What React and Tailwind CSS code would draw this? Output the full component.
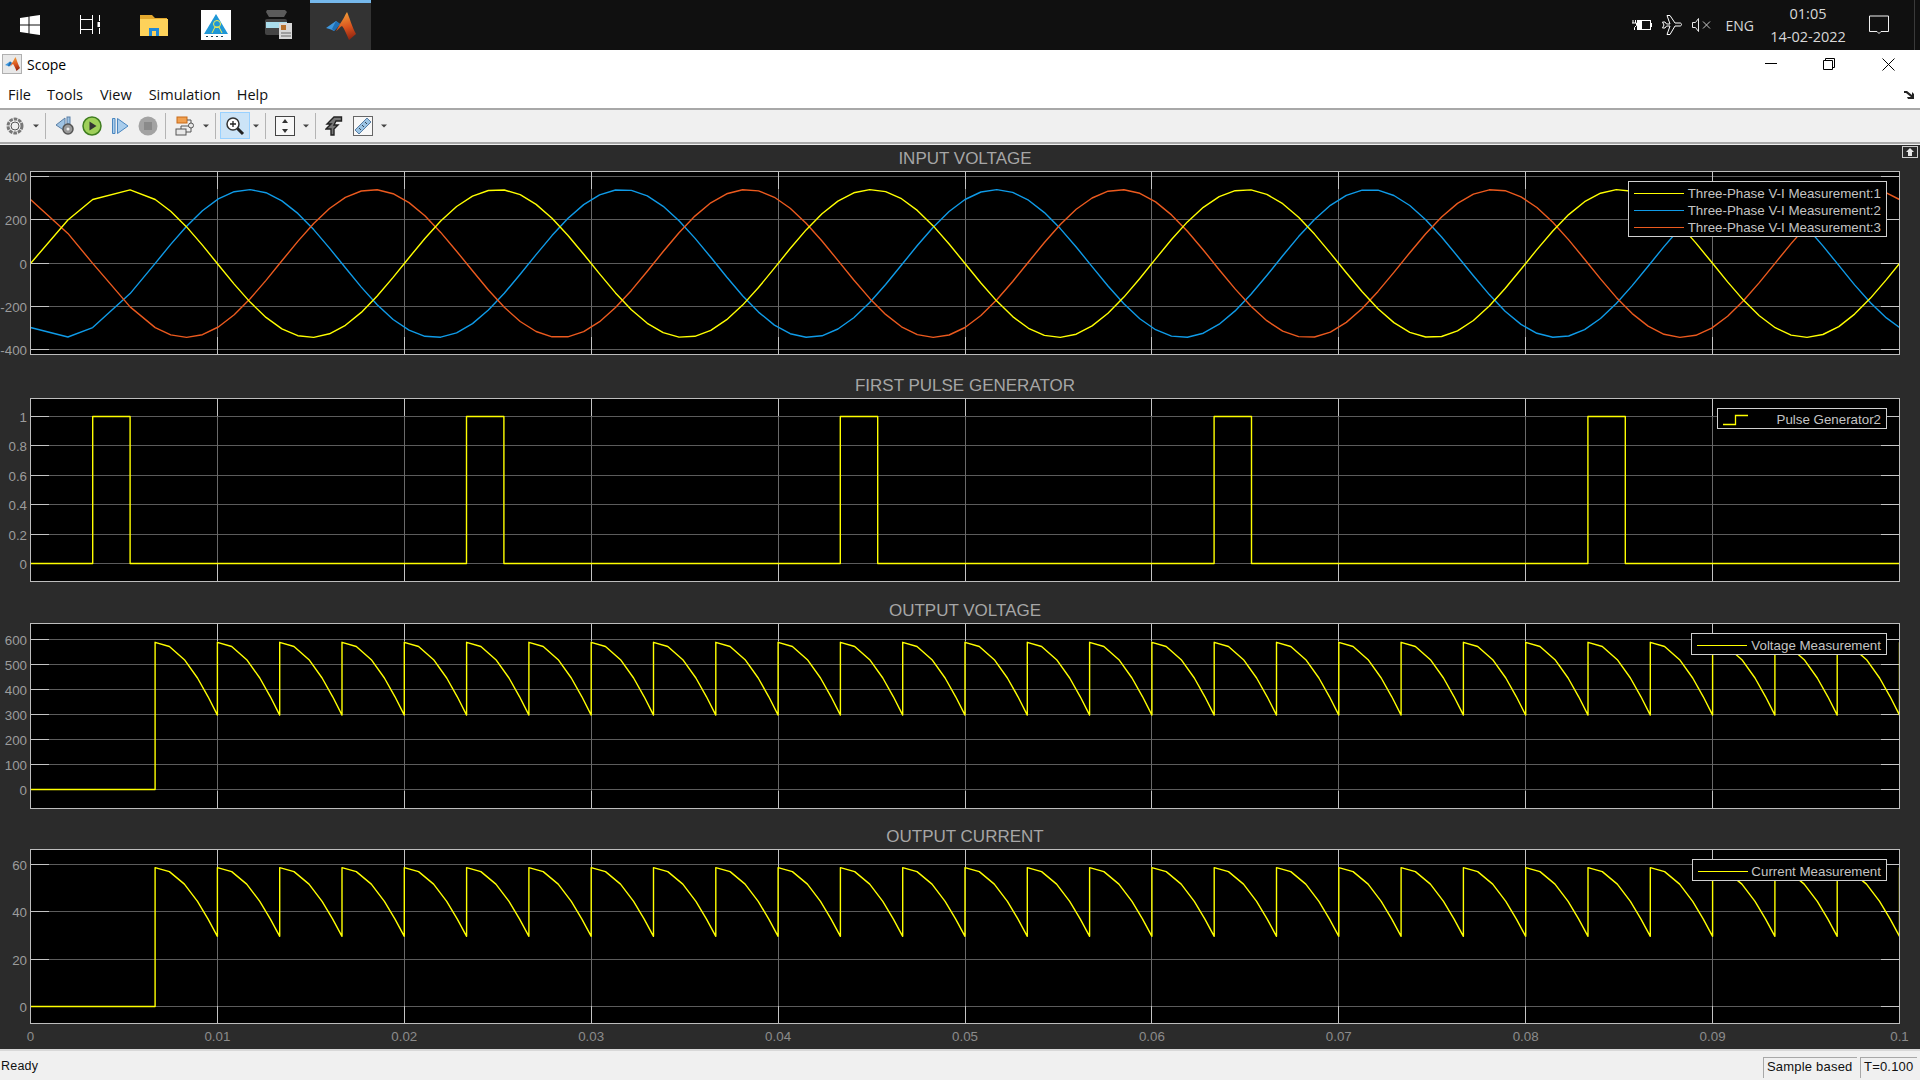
// App.jsx - Simulink scope window
import React from "react";

const PLOT_W = 1870;
const YELLOW = "#ffff00";
const BLUE = "#0f9be8";
const ORANGE = "#ec5a1e";

const xOf = (t) => 0.5 + (t / 0.1) * (PLOT_W - 1);

// sample times are uneven in the solver output, so the first ones are coarse
const sineTimes = () => {
  const ts = [0, 0.002, 0.00333, 0.00533, 0.00667];
  for (let t = 0.0075; t < 0.1; t += 0.00085) ts.push(t);
  ts.push(0.1);
  return ts;
};

const sinePoints = (shift, yOf) =>
  sineTimes()
    .map((t) => `${xOf(t).toFixed(1)},${yOf(340 * Math.sin(2 * Math.PI * 50 * t + shift)).toFixed(1)}`)
    .join(" ");

const pulsePoints = (yOf) => {
  const pts = [[0, 0]];
  for (let k = 0; k < 5; k++) {
    const a = 0.00333 + k * 0.02;
    const b = 0.00533 + k * 0.02;
    pts.push([a, 0], [a, 1], [b, 1], [b, 0]);
  }
  pts.push([0.1, 0]);
  return pts.map(([t, v]) => `${xOf(t).toFixed(1)},${yOf(v).toFixed(1)}`).join(" ");
};

// rectified output: zero until first firing, then a cosine cap every 1/300 s
const rectifiedPoints = (peak, yOf) => {
  const period = 1 / 300;
  const start = 1 / 150;
  const fracs = [0, 0.23, 0.47, 0.68, 0.85];
  const pts = [[0, 0], [start, 0]];
  for (let k = 0; start + k * period < 0.0999; k++) {
    const t0 = start + k * period;
    fracs.forEach((f) => {
      pts.push([t0 + f * period, peak * Math.cos((f * Math.PI) / 3)]);
    });
    pts.push([t0 + period, peak * 0.505]);
  }
  pts.push([0.1, peak]);
  return pts.map(([t, v]) => `${xOf(t).toFixed(1)},${yOf(v).toFixed(1)}`).join(" ");
};

const linear = (v0, y0, v1, y1) => (v) => y0 + ((v - v0) * (y1 - y0)) / (v1 - v0);

const y1 = linear(0, 92.5, 400, 5.5);
const y2 = linear(0, 165.5, 1, 18.5);
const y3 = linear(0, 166.5, 600, 16.5);
const y4 = linear(0, 157.5, 60, 15.5);

function Plot({ title, height, className, ticks, traces, children }) {
  const grid = [1, 2, 3, 4, 5, 6, 7, 8, 9].map((i) => Math.floor(xOf(i / 100)) + 0.5);
  return (
    <div className={className}>
      <div className="ml-[30px] h-[26px] w-[1870px] text-center text-[17px] leading-[28px] text-[#a6a6a6]">{title}</div>
      <div className="flex">
        <div className="relative w-[30px]" style={{ height }}>
          {ticks.map((t) => (
            <span
              key={t.label}
              className="absolute right-[3px] text-[13.33px] leading-[14px] text-[#9c9c9c]"
              style={{ top: t.y - 6 }}
            >
              {t.label}
            </span>
          ))}
        </div>
        <div className="relative w-[1870px] bg-black" style={{ height }}>
          <svg width={PLOT_W} height={height} className="block">
            {ticks.map((t) => (
              <g key={t.label}>
                <line x1="0" x2={PLOT_W} y1={t.y} y2={t.y} stroke="#5c5c5c" />
                <line x1="0" x2="19" y1={t.y} y2={t.y} stroke="#c4c4c4" />
                <line x1={PLOT_W - 19} x2={PLOT_W} y1={t.y} y2={t.y} stroke="#c4c4c4" />
              </g>
            ))}
            {grid.map((x) => (
              <g key={x}>
                <line x1={x} x2={x} y1="0" y2={height} stroke="#6a6a6a" />
                <line x1={x} x2={x} y1="0" y2="18" stroke="#c4c4c4" />
                <line x1={x} x2={x} y1={height - 18} y2={height} stroke="#c4c4c4" />
              </g>
            ))}
            {traces.map((tr, i) => (
              <polyline key={i} points={tr.points} fill="none" stroke={tr.color} strokeWidth="1.4" strokeLinejoin="round" />
            ))}
            <rect x="0.5" y="0.5" width={PLOT_W - 1} height={height - 1} fill="none" stroke="#bdbdbd" />
          </svg>
          {children}
        </div>
      </div>
    </div>
  );
}

function Legend({ className, rows, wide }) {
  return (
    <div className={`absolute top-[10px] right-[13px] border border-[#d0d0d0] bg-black px-[5px] ${className}`}>
      {rows.map((r) => (
        <div key={r.label} className="flex h-[17px] items-center justify-between">
          {r.step ? (
            <svg width="26" height="12" className="shrink-0">
              <path d="M0 10.5H12.5V1.5H25" fill="none" stroke={r.color} strokeWidth="1.3" />
            </svg>
          ) : (
            <span className="h-[1.5px] w-[50px] shrink-0" style={{ backgroundColor: r.color }} />
          )}
          <span className={`text-[13.33px] leading-[17px] whitespace-nowrap text-[#c4c4c4] ${wide ? "ml-[4px]" : ""}`}>
            {r.label}
          </span>
        </div>
      ))}
    </div>
  );
}

function Caret() {
  return (
    <svg width="6" height="4" className="shrink-0">
      <path d="M0 0.5H6L3 3.5Z" fill="#444" />
    </svg>
  );
}

function Sep({ className }) {
  return <span className={`h-[26px] w-px shrink-0 bg-[#b4b4b4] ${className}`} />;
}

function MatlabLogo({ size }) {
  return (
    <svg width={size} height={size} viewBox="0 0 30 30" className="shrink-0">
      <defs>
        <linearGradient id="peak" x1="0.4" y1="0" x2="0.6" y2="1">
          <stop offset="0" stopColor="#f2a03a" />
          <stop offset="0.55" stopColor="#d9531e" />
          <stop offset="1" stopColor="#8f2410" />
        </linearGradient>
      </defs>
      <path d="M0 16L10 9L14 12L8 19L5 17.5Z" fill="#3f97dd" />
      <path d="M10 9L14 12L11 16L8 19L6 17Z" fill="#1f6fb5" />
      <path d="M14 12C17 8 19 3 21 0C23 4 26 15 30 22L23 28C21 23 18 16 16 14C14 15 12 18 10 19Z" fill="url(#peak)" />
    </svg>
  );
}

function TaskBar() {
  return (
    <div className="flex h-[50px] shrink-0 items-center bg-[#101010]">
      {/* start */}
      <svg width="20" height="20" viewBox="0 0 20 20" className="ml-[20px] shrink-0">
        <path d="M0 3L8.5 1.8V9.5H0ZM9.5 1.6L20 0V9.5H9.5ZM0 10.5H8.5V18.2L0 17ZM9.5 10.5H20V20L9.5 18.4Z" fill="#fff" />
      </svg>
      {/* task view */}
      <svg width="20" height="20" viewBox="0 0 20 20" className="ml-[40px] shrink-0">
        <path d="M0.5 0V19M12.5 0V19M0 4.5H13M0 14.5H13M19.5 0V6M19.5 13V19" fill="none" stroke="#fff" />
        <rect x="17.5" y="7" width="3" height="5" fill="#fff" />
      </svg>
      {/* explorer */}
      <svg width="28" height="24" viewBox="0 0 28 24" className="ml-[40px] shrink-0">
        <path d="M0 2H12L15 5H27V23H0Z" fill="#e3a82e" />
        <rect x="0" y="6" width="28" height="17" fill="#fdd25a" />
        <path d="M9 23V15H19V23H16V18H12V23Z" fill="#1e88d8" />
      </svg>
      {/* institute logo */}
      <div className="ml-[33px] flex h-[30px] w-[30px] shrink-0 items-center justify-center bg-white">
        <svg width="26" height="26" viewBox="0 0 26 26">
          <path d="M13 2L25 22H1Z" fill="#1f97d6" />
          <circle cx="14" cy="12" r="3.5" fill="none" stroke="#f2ee50" />
          <path d="M9 21L12 15L16 15L19 21" fill="none" stroke="#f2ee50" />
          <path d="M3 24.5H23" stroke="#245" strokeDasharray="2 3" />
        </svg>
      </div>
      {/* scanner */}
      <svg width="30" height="32" viewBox="0 0 30 32" className="ml-[32px] shrink-0">
        <path d="M4 1H22L24 3L21 8H6L3 3Z" fill="#5b5b5b" />
        <rect x="2" y="10" width="22" height="16" rx="2" fill="#444" />
        <rect x="3" y="13" width="21" height="6" fill="#a9dcec" />
        <rect x="16" y="14" width="13" height="16" fill="#d8d8d8" />
        <rect x="18" y="16" width="5" height="5" fill="#b6702c" />
        <path d="M18 24H28M18 27H28" stroke="#666" />
      </svg>
      {/* active matlab tile */}
      <div className="ml-[17px] flex h-[50px] w-[61px] shrink-0 items-center justify-center border-t-[3px] border-[#76b9ed] bg-[#333333]">
        <MatlabLogo size={30} />
      </div>

      {/* tray */}
      <svg width="20" height="14" viewBox="0 0 20 14" className="ml-auto shrink-0">
        <path d="M1 2V5M3.5 2V5M0 5H4.5V7.5L2.5 9.5V12" fill="none" stroke="#fff" />
        <rect x="5.5" y="2.5" width="13" height="9" fill="none" stroke="#fff" />
        <rect x="6" y="3" width="4" height="8" fill="#fff" />
        <rect x="19" y="5" width="1" height="4" fill="#fff" />
      </svg>
      <svg width="20" height="20" viewBox="0 0 20 20" className="ml-[10px] shrink-0">
        <path d="M0.5 7H3L4.5 9H8L5 0.5H8L13 8H18C20 8 20 11 18 11H13L8 19.5H5L8 11H4.5L3 13H0.5L2 10Z" fill="none" stroke="#fff" />
      </svg>
      <svg width="19" height="14" viewBox="0 0 19 14" className="ml-[10px] shrink-0">
        <path d="M0.5 4.5H3.5L6.5 0.5V13.5L3.5 9.5H0.5Z" fill="none" stroke="#e8e8e8" />
        <path d="M11 3.5L18 10.5M18 3.5L11 10.5" stroke="#c8c8c8" />
      </svg>
      <span className="ml-[15px] font-['Open_Sans',sans-serif] text-[14px] text-[#d8d8d8]">ENG</span>
      <div className="ml-[14px] flex w-[80px] flex-col items-center font-['Open_Sans',sans-serif] text-[14.5px] leading-[23px] text-[#d8d8d8]">
        <span>01:05</span>
        <span>14-02-2022</span>
      </div>
      <svg width="20" height="20" viewBox="0 0 20 20" className="ml-[21px] shrink-0">
        <path d="M0.5 1H19.5V16.5H12L10 18.5L8 16.5H0.5Z" fill="none" stroke="#f0f0f0" />
      </svg>
      <span className="mr-[5px] ml-[25px] h-[50px] w-px bg-[#3a3a3a]" />
    </div>
  );
}

function TitleBar() {
  return (
    <div className="flex h-[32px] shrink-0 items-center bg-white pb-[4px] pl-[2px]">
      <div className="flex h-[20px] w-[20px] shrink-0 items-center justify-center border border-[#b0b0b0] bg-[#e8e8e8]">
        <MatlabLogo size={15} />
      </div>
      <span className="ml-[5px] font-['Open_Sans',sans-serif] text-[14px] text-black">Scope</span>
      <svg width="12" height="2" className="ml-auto shrink-0">
        <rect width="12" height="1" fill="#000" />
      </svg>
      <svg width="12" height="12" viewBox="0 0 12 12" className="ml-[46px] shrink-0">
        <path d="M0.5 2.5H9.5V11.5H0.5ZM2.5 2.5V0.5H11.5V9.5H9.5" fill="none" stroke="#000" />
      </svg>
      <svg width="13" height="13" viewBox="0 0 13 13" className="mr-[25px] ml-[47px] shrink-0">
        <path d="M0.5 0.5L12.5 12.5M12.5 0.5L0.5 12.5" stroke="#000" />
      </svg>
    </div>
  );
}

function MenuBar() {
  return (
    <div className="flex h-[28px] shrink-0 items-center border-b-2 border-[#a8a8a8] bg-white pb-[1px] pl-[8px] font-['Open_Sans',sans-serif] text-[14.5px] text-[#111]">
      <span>File</span>
      <span className="ml-[16px]">Tools</span>
      <span className="ml-[17px]">View</span>
      <span className="ml-[17px]">Simulation</span>
      <span className="ml-[16px]">Help</span>
      <svg width="12" height="10" viewBox="0 0 12 10" className="mr-[5px] ml-auto shrink-0">
        <path d="M1 1H4L9 5V2L11 4V9H5L4 7H8L3 3H1Z" fill="#222" />
      </svg>
    </div>
  );
}

function ToolBar() {
  return (
    <div className="h-[35px] shrink-0 bg-[#f0f0f0]">
      <div className="flex h-[34px] items-center border-b-2 border-[#a8a8a8] pb-[1px]">
        <svg width="18" height="18" viewBox="0 0 18 18" className="ml-[6px] shrink-0">
          <circle cx="9" cy="9" r="7" fill="none" stroke="#777" strokeWidth="3" strokeDasharray="3.5 1" />
          <circle cx="9" cy="9" r="4" fill="#eee" stroke="#555" />
        </svg>
        <div className="ml-[9px] flex"><Caret /></div>
        <Sep className="ml-[6px]" />
        <svg width="20" height="20" viewBox="0 0 20 20" className="ml-[9px] shrink-0">
          <path d="M10 2L1 9L10 15Z" fill="#9fc3e3" stroke="#5a7fa5" />
          <rect x="12" y="1" width="3" height="7" fill="#9fc3e3" stroke="#5a7fa5" />
          <circle cx="13" cy="13" r="5" fill="#999" stroke="#555" strokeWidth="1.5" />
          <circle cx="13" cy="13" r="1.5" fill="#eee" />
        </svg>
        <svg width="20" height="20" viewBox="0 0 20 20" className="ml-[7px] shrink-0">
          <circle cx="10" cy="10" r="9" fill="#9fd05a" stroke="#3f7d1f" strokeWidth="1.5" />
          <path d="M7.5 5.5L14.5 10L7.5 14.5Z" fill="#333" />
        </svg>
        <svg width="17" height="16" viewBox="0 0 17 16" className="ml-[10px] shrink-0">
          <path d="M0.5 0.5H3V15.5H0.5Z" fill="#a9cdec" stroke="#4a86bf" />
          <path d="M5.5 0.5L16 8L5.5 15.5Z" fill="#a9cdec" stroke="#4a86bf" />
        </svg>
        <svg width="20" height="20" viewBox="0 0 20 20" className="ml-[9px] shrink-0">
          <circle cx="10" cy="10" r="9.5" fill="#a3a3a3" />
          <rect x="6" y="6" width="8" height="8" fill="#8a8a8a" />
        </svg>
        <Sep className="ml-[7px]" />
        <svg width="20" height="20" viewBox="0 0 20 20" className="ml-[9px] shrink-0">
          <rect x="2" y="1" width="10" height="6" fill="#f0a050" stroke="#c86a18" />
          <rect x="1" y="13" width="10" height="6" fill="#e8e8e8" stroke="#555" />
          <circle cx="16" cy="9.5" r="2.5" fill="#e8e8e8" stroke="#555" />
          <path d="M12 4H16V7M14 10H6V13M11 16H16V12" fill="none" stroke="#555" />
        </svg>
        <div className="ml-[8px] flex"><Caret /></div>
        <Sep className="ml-[6px]" />
        <div className="ml-[4px] flex h-[27px] w-[30px] shrink-0 items-center justify-center border border-[#99d1ff] bg-[#cce4f7]">
          <svg width="20" height="20" viewBox="0 0 20 20">
            <circle cx="8" cy="8" r="6" fill="#fff" stroke="#333" strokeWidth="1.5" />
            <path d="M5 8H11M8 5V11" stroke="#222" strokeWidth="1.3" />
            <path d="M12.5 12.5L18 18" stroke="#222" strokeWidth="3" />
          </svg>
        </div>
        <div className="ml-[3px] flex"><Caret /></div>
        <Sep className="ml-[6px]" />
        <svg width="20" height="20" viewBox="0 0 20 20" className="ml-[9px] shrink-0">
          <rect x="0.5" y="0.5" width="19" height="19" fill="#f8f8f8" stroke="#444" />
          <path d="M10 3L13 7H7ZM10 17L13 13H7Z" fill="#333" />
        </svg>
        <div className="ml-[8px] flex"><Caret /></div>
        <Sep className="ml-[6px]" />
        <svg width="18" height="20" viewBox="0 0 18 20" className="ml-[9px] shrink-0">
          <path d="M16.5 1H9L2 8H6L1 13H6V19H9V13L13 9H9L11 5H16.5Z" fill="#777" stroke="#222" strokeWidth="1.4" />
        </svg>
        <svg width="20" height="20" viewBox="0 0 20 20" className="ml-[10px] shrink-0">
          <rect x="0.5" y="0.5" width="19" height="19" fill="#f8f8f8" stroke="#666" />
          <path d="M2 14L14 2L18 6L6 18Z" fill="#9cc4e4" stroke="#5a7fa5" />
          <path d="M6 12L8 14M9 9L11 11M12 6L14 8" stroke="#345" />
        </svg>
        <div className="ml-[8px] flex"><Caret /></div>
      </div>
    </div>
  );
}

function StatusBar() {
  return (
    <div className="flex h-[31px] shrink-0 items-end border-t-2 border-[#d8d8d8] bg-[#f0f0f0] font-['Liberation_Sans',sans-serif] text-[13px] tracking-[0.2px] text-[#111]">
      <span className="mb-[4px] ml-[1px] text-[12.5px]">Ready</span>
      <span className="mb-[2px] ml-auto flex h-[21px] w-[94px] items-center border-t border-l border-[#a8a8a8] pb-[2px] pl-[3px]">Sample based</span>
      <span className="mr-[3px] mb-[2px] ml-[3px] flex h-[21px] w-[57px] items-center border-t border-l border-[#a8a8a8] pb-[2px] pl-[3px]">T=0.100</span>
    </div>
  );
}

export default function App() {
  const xLabels = ["0", "0.01", "0.02", "0.03", "0.04", "0.05", "0.06", "0.07", "0.08", "0.09", "0.1"];

  const ticks1 = [
    { label: "400", y: 5.5 },
    { label: "200", y: 48.5 },
    { label: "0", y: 92.5 },
    { label: "-200", y: 135.5 },
    { label: "-400", y: 178.5 },
  ];
  const ticks2 = [
    { label: "1", y: 18.5 },
    { label: "0.8", y: 47.5 },
    { label: "0.6", y: 77.5 },
    { label: "0.4", y: 106.5 },
    { label: "0.2", y: 136.5 },
    { label: "0", y: 165.5 },
  ];
  const ticks3 = [
    { label: "600", y: 16.5 },
    { label: "500", y: 41.5 },
    { label: "400", y: 66.5 },
    { label: "300", y: 91.5 },
    { label: "200", y: 116.5 },
    { label: "100", y: 141.5 },
    { label: "0", y: 166.5 },
  ];
  const ticks4 = [
    { label: "60", y: 15.5 },
    { label: "40", y: 62.5 },
    { label: "20", y: 110.5 },
    { label: "0", y: 157.5 },
  ];

  return (
    <div className="flex h-[1080px] w-[1920px] flex-col overflow-hidden bg-[#2b2b2b] font-['Liberation_Sans',sans-serif]">
      <TaskBar />
      <TitleBar />
      <MenuBar />
      <ToolBar />
      <div className="relative min-h-0 flex-1 bg-[#2b2b2b]">
        <span className="absolute top-[1px] right-[2px] flex h-[12px] w-[16px] items-center justify-center border border-[#cfcfcf]">
          <svg width="10" height="8" viewBox="0 0 10 8">
            <path d="M5 0L9 4H7V8H3V4H1Z" fill="#e8e8e8" />
          </svg>
        </span>
        <Plot
          title="INPUT VOLTAGE"
          height={184}
          ticks={ticks1}
          traces={[
            { color: BLUE, points: sinePoints((-2 * Math.PI) / 3, y1) },
            { color: ORANGE, points: sinePoints((2 * Math.PI) / 3, y1) },
            { color: YELLOW, points: sinePoints(0, y1) },
          ]}
        >
          <Legend
            className="pt-[3px]"
            wide
            rows={[
              { label: "Three-Phase V-I Measurement:1", color: YELLOW },
              { label: "Three-Phase V-I Measurement:2", color: BLUE },
              { label: "Three-Phase V-I Measurement:3", color: ORANGE },
            ]}
          />
        </Plot>
        <Plot
          title="FIRST PULSE GENERATOR"
          className="mt-[17px]"
          height={184}
          ticks={ticks2}
          traces={[{ color: YELLOW, points: pulsePoints(y2) }]}
        >
          <Legend
            className="w-[170px] pt-[2px]"
            rows={[{ label: "Pulse Generator2", color: YELLOW, step: true }]}
          />
        </Plot>
        <Plot
          title="OUTPUT VOLTAGE"
          className="mt-[15px]"
          height={186}
          ticks={ticks3}
          traces={[{ color: YELLOW, points: rectifiedPoints(589, y3) }]}
        >
          <Legend
            className="w-[196px] pt-[3px]"
            rows={[{ label: "Voltage Measurement", color: YELLOW }]}
          />
        </Plot>
        <Plot
          title="OUTPUT CURRENT"
          className="mt-[14px]"
          height={175}
          ticks={ticks4}
          traces={[{ color: YELLOW, points: rectifiedPoints(58.7, y4) }]}
        >
          <Legend
            className="w-[195px] pt-[3px]"
            rows={[{ label: "Current Measurement", color: YELLOW }]}
          />
        </Plot>
        <div className="relative mt-[6px] h-[14px] w-[1920px]">
          {xLabels.map((label, i) => (
            <span
              key={label}
              className="absolute -translate-x-1/2 text-[13.33px] leading-[14px] text-[#8c8c8c]"
              style={{ left: 30.5 + i * 186.9 }}
            >
              {label}
            </span>
          ))}
        </div>
      </div>
      <StatusBar />
    </div>
  );
}
